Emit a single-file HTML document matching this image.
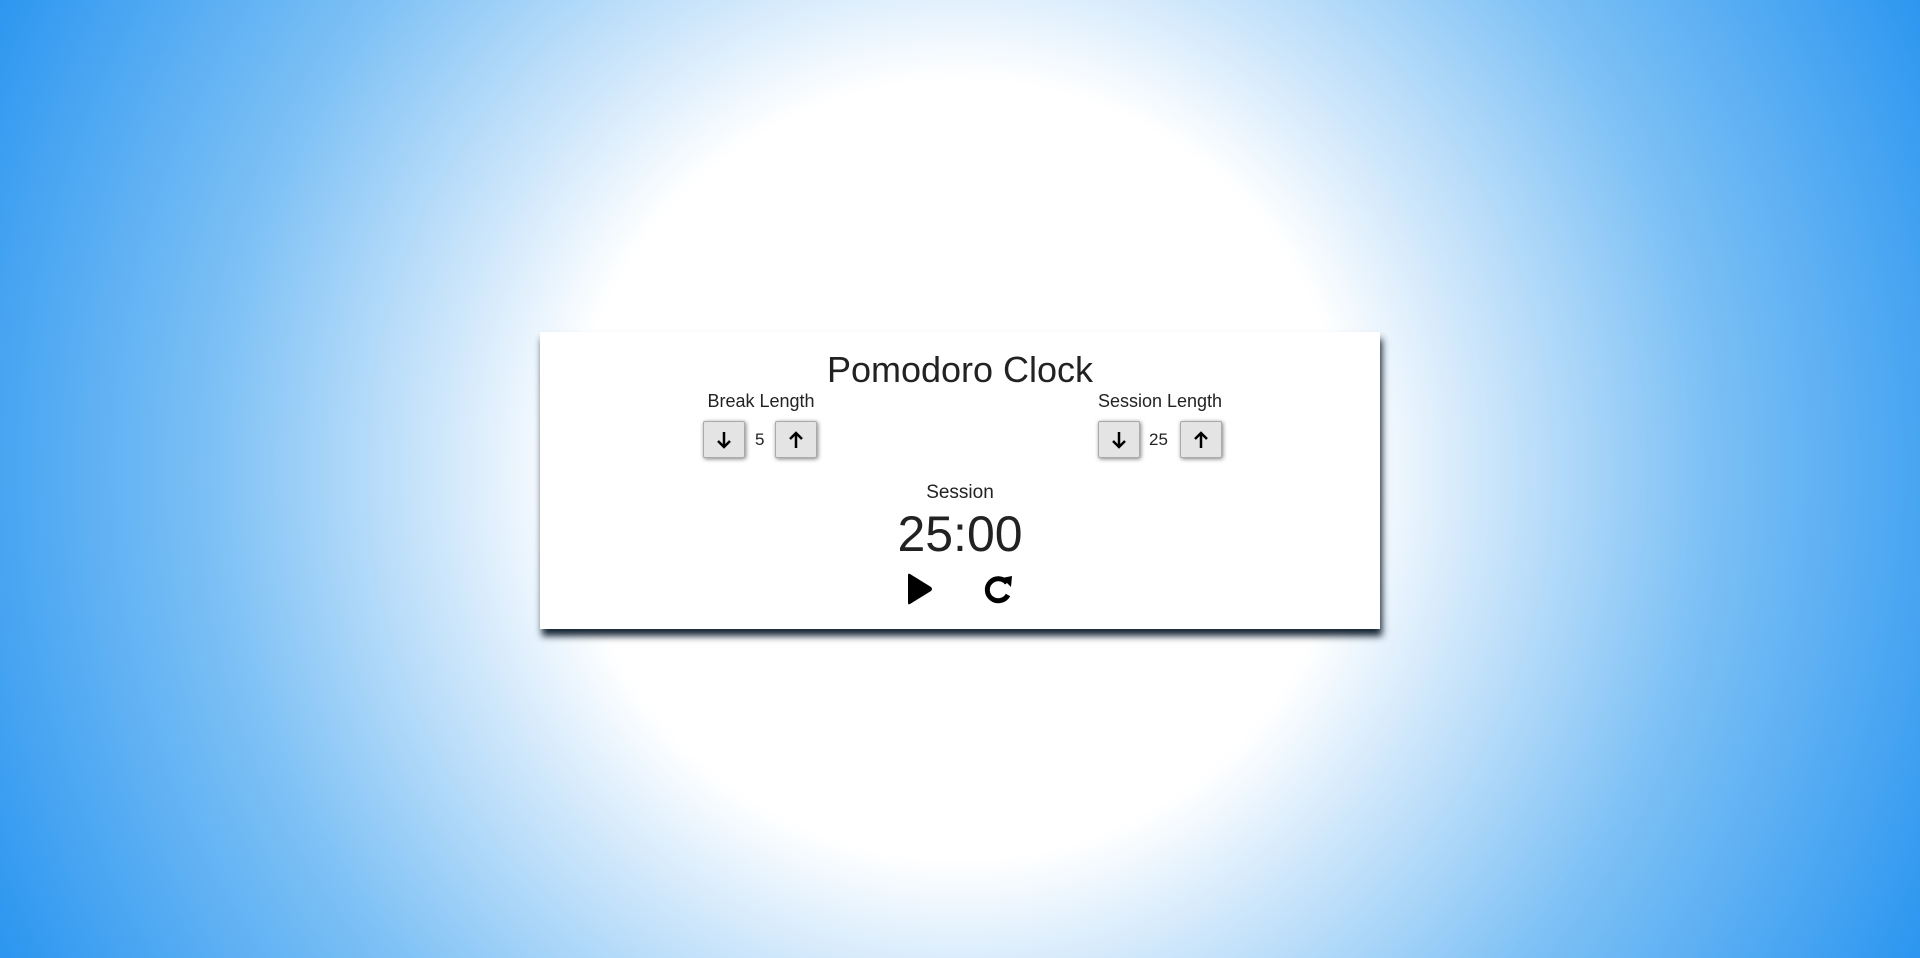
<!DOCTYPE html>
<html><head><style>
html,body{margin:0;height:958px;width:1920px;overflow:hidden}
body{background:radial-gradient(circle at 960px 470px,#fff 0,#fff 390px,#cfe7fb 520px,#7cc0f5 750px,#2a95f0 1080px);font-family:"Liberation Sans",sans-serif;color:#222;position:relative}
.card{position:absolute;left:540px;top:332px;width:840px;height:297px;background:#fff;box-shadow:2px 7px 7px rgba(10,25,40,.95)}
.t{position:absolute;left:0;width:100%;text-align:center;font-weight:300}
.lab{position:absolute;font-size:18px;text-align:center}
.btn{position:absolute;width:40px;height:35px;background:#e4e4e4;border:1px solid #aaa;box-shadow:1px 1px 4px rgba(0,0,0,.5);border-radius:2px}
.btn svg{position:absolute;left:12px;top:9px}
.v{position:absolute;font-size:17px}
</style></head><body>
<div class="card">
<div class="t" style="top:17px;font-size:36px">Pomodoro Clock</div>
<div class="lab" style="left:158px;top:59px;width:126px">Break Length</div>
<div class="lab" style="left:549px;top:59px;width:142px">Session Length</div>
<div class="btn" style="left:163px;top:89px"><svg width="16" height="18" viewBox="0 0 16 18"><path d="M8 1v15M2 10l6 6 6-6" stroke="#000" stroke-width="2.5" fill="none"/></svg></div>
<div class="v" style="left:215px;top:98px">5</div>
<div class="btn" style="left:235px;top:89px"><svg width="16" height="18" viewBox="0 0 16 18"><path d="M8 17V2M2 8l6-6 6 6" stroke="#000" stroke-width="2.5" fill="none"/></svg></div>
<div class="btn" style="left:558px;top:89px"><svg width="16" height="18" viewBox="0 0 16 18"><path d="M8 1v15M2 10l6 6 6-6" stroke="#000" stroke-width="2.5" fill="none"/></svg></div>
<div class="v" style="left:609px;top:98px">25</div>
<div class="btn" style="left:640px;top:89px"><svg width="16" height="18" viewBox="0 0 16 18"><path d="M8 17V2M2 8l6-6 6 6" stroke="#000" stroke-width="2.5" fill="none"/></svg></div>
<div class="t" style="top:150px;font-size:19px">Session</div>
<div class="t" style="top:173px;font-size:50px">25:00</div>
<svg style="position:absolute;left:364px;top:240px" width="30" height="34" viewBox="0 0 30 34"><path d="M4 3Q4 1 6 2L27 15Q29 17 27 19L6 32Q4 33 4 31Z" fill="#000"/></svg>
<svg style="position:absolute;left:443px;top:241px" width="32" height="32" viewBox="0 0 32 32"><path d="M24 10A11 11 0 1 0 25 22" stroke="#000" stroke-width="5" fill="none"/><path d="M19 5L29 3L28 14Z" fill="#000"/></svg>
</div>
</body></html>
